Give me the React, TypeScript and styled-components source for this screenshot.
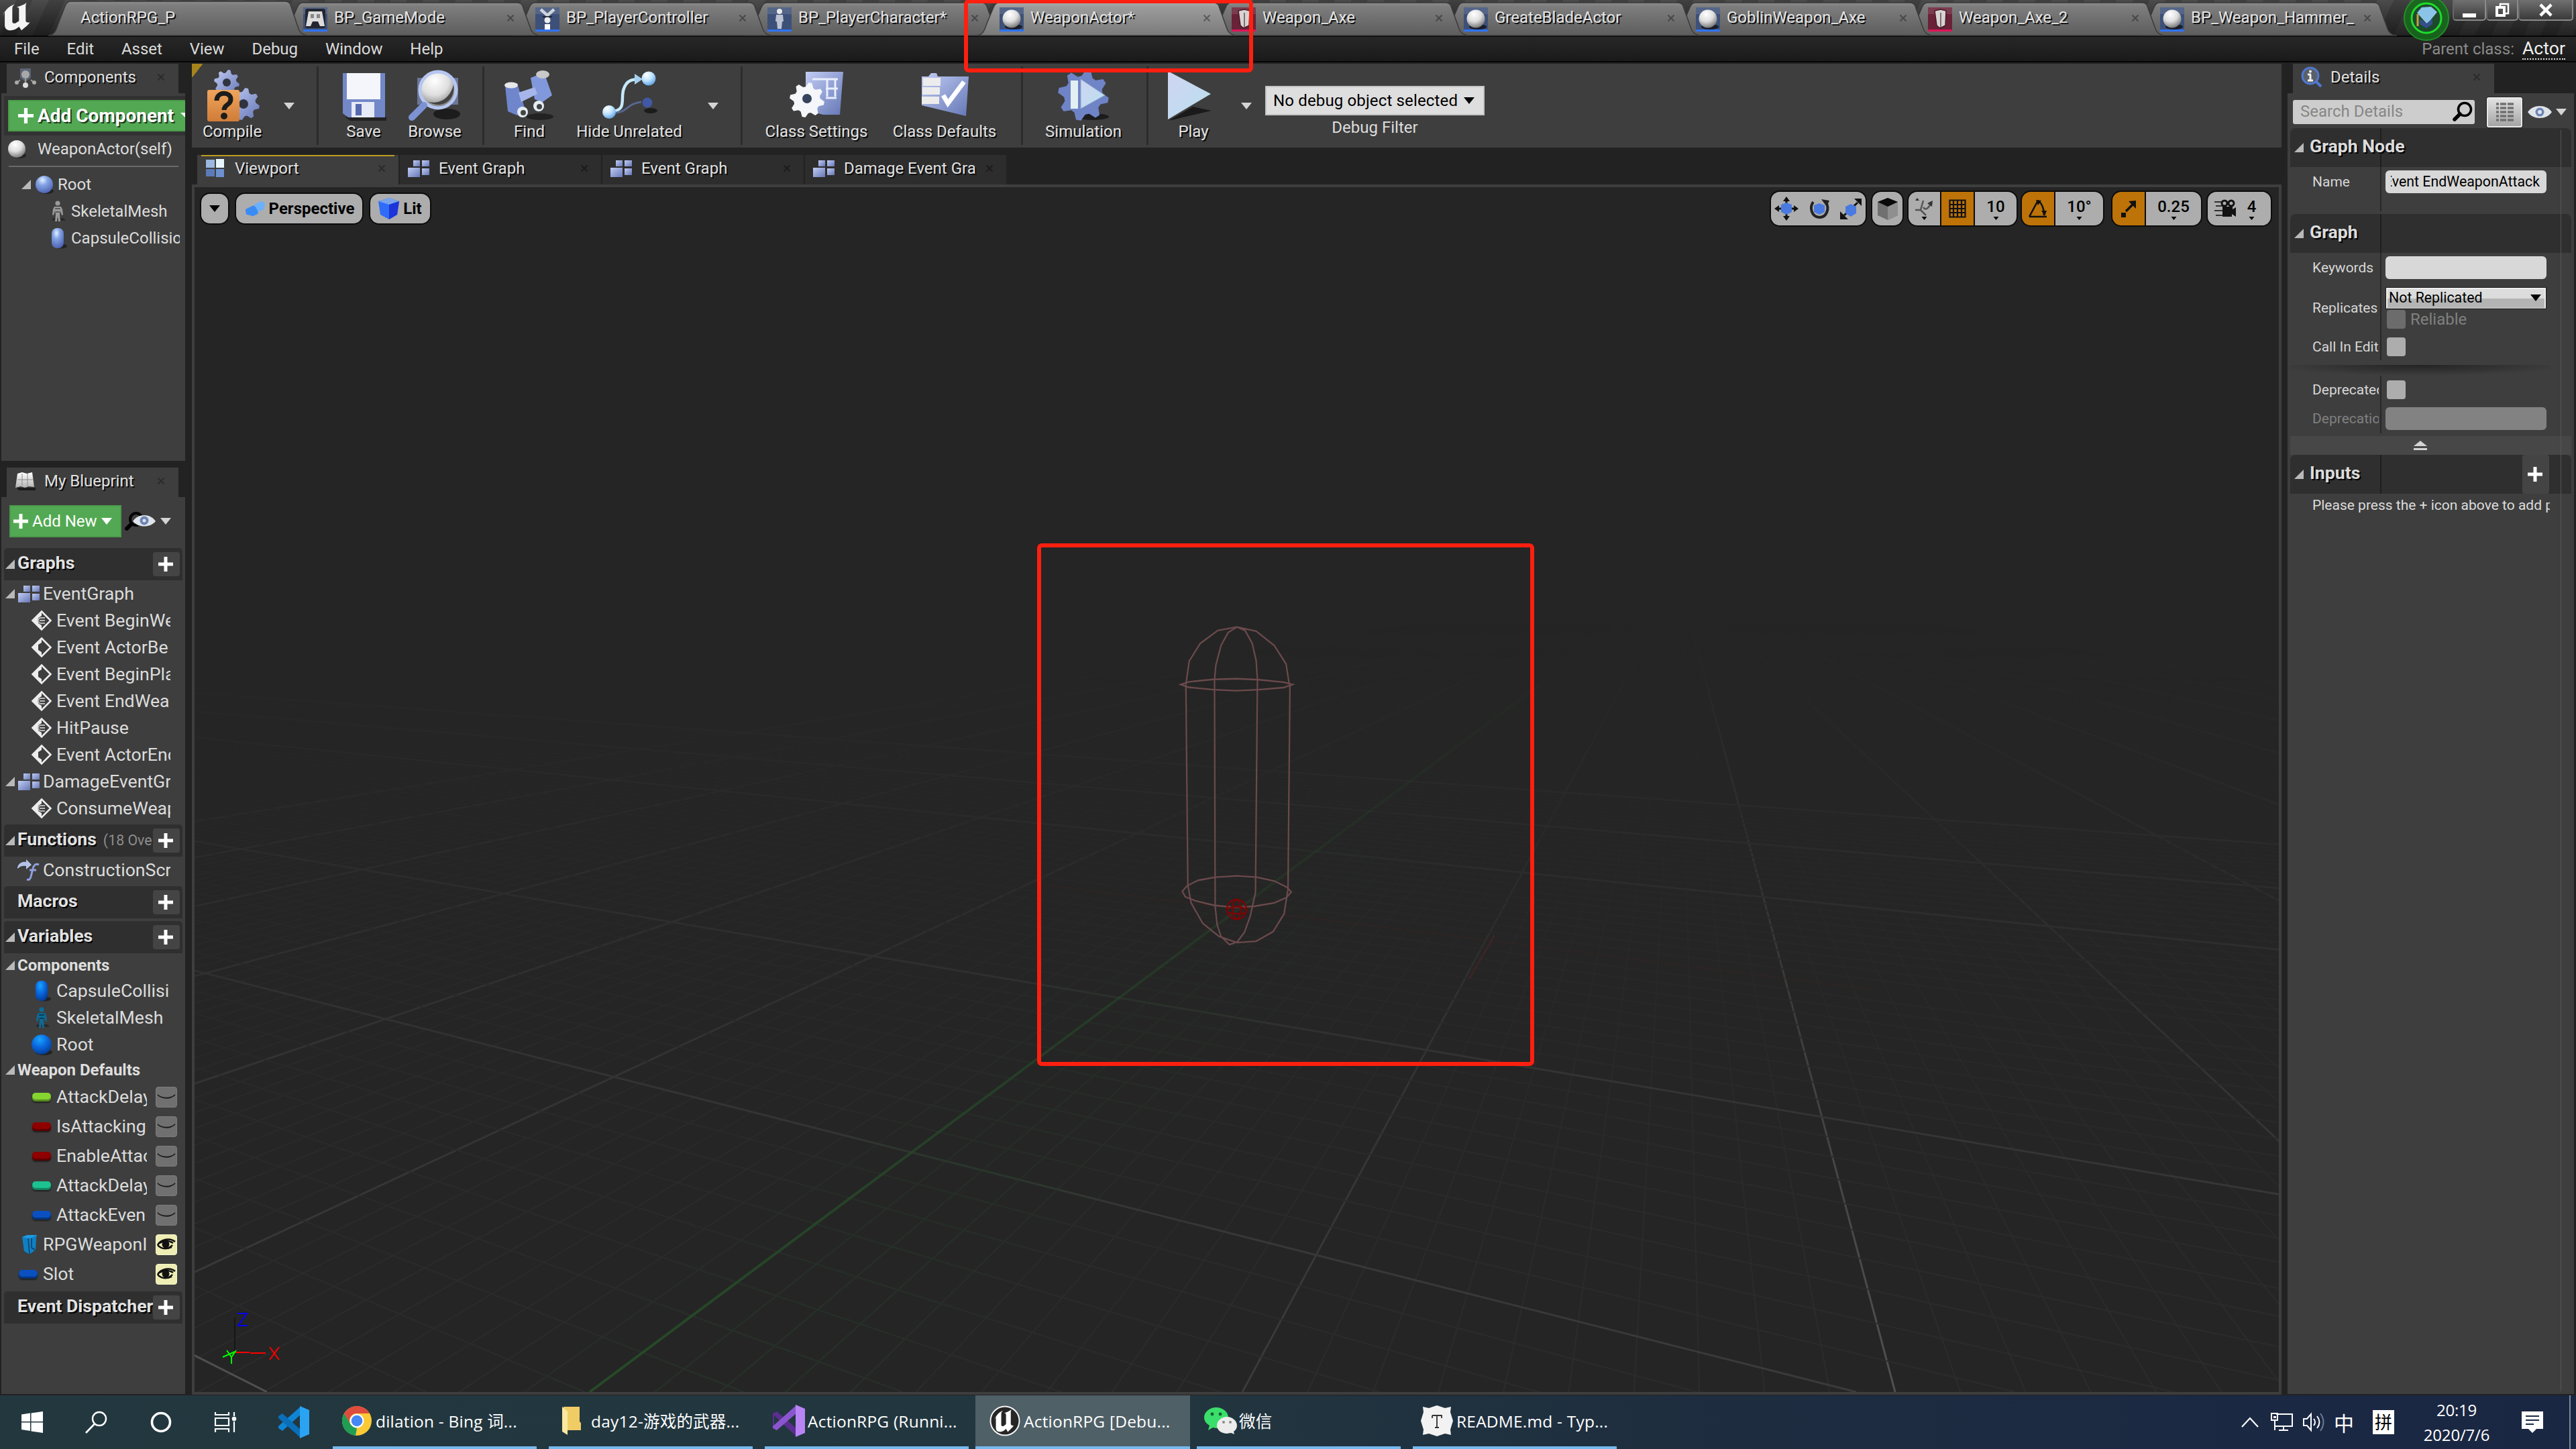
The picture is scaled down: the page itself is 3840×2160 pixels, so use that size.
import React from "react";
import styled, { createGlobalStyle, css } from "styled-components";

const ui = `Roboto, "Noto Sans CJK SC", sans-serif`;
const sys = `"Open Sans", "Noto Sans CJK SC", sans-serif`;

const Global = createGlobalStyle`
  * { box-sizing: border-box; }
  html, body { margin: 0; padding: 0; background: #222; }
  body { width: 3840px; height: 2160px; overflow: hidden; }
  svg { display: block; flex: none; overflow: visible; }
`;

const Screen = styled.div`
  position: relative;
  display: flex;
  flex-direction: column;
  width: 3840px;
  height: 2160px;
  overflow: hidden;
  background: #222222;
  color: #dcdcdc;
  font: 400 24px/28px ${ui};
  white-space: nowrap;
`;

/* ---------- title bar ---------- */

const TitleBar = styled.header`
  position: relative;
  display: flex;
  height: 53px;
  flex: none;
  background:
    linear-gradient(rgba(0, 0, 0, 0), rgba(0, 0, 0, 0.55)),
    repeating-linear-gradient(115deg, #4b4b4b 0 22px, #404040 22px 44px);
`;
const LogoBox = styled.div`
  width: 72px;
  flex: none;
  padding: 4px 0 0 2px;
`;
const TabStrip = styled.div`
  display: flex;
  flex: none;
  width: 3512px;
`;
const AppTab = styled.div<{ $z: number }>`
  position: relative;
  z-index: ${(p) => p.$z};
  width: 387px;
  height: 53px;
  margin-right: -41px;
  flex: none;
  display: flex;
  align-items: center;
  padding: 0 39px 0 34px;
`;
const TabShape = styled.svg`
  position: absolute;
  left: 0;
  top: 0;
  z-index: -1;
`;
const TabLabel = styled.span<{ $ml: number }>`
  margin-left: ${(p) => p.$ml}px;
  flex: 1;
  color: #e4e4e4;
  text-shadow: 2px 2px 0 #111;
  overflow: hidden;
  padding-bottom: 2px;
`;
const WindowButtons = styled.div`
  position: absolute;
  right: 4px;
  top: 0;
  display: flex;
  height: 31px;
`;
const WinButton = styled.div<{ $w: number }>`
  width: ${(p) => p.$w}px;
  height: 31px;
  display: flex;
  align-items: center;
  justify-content: center;
  border: 2px solid #8a8a8a;
  border-top: 0;
  border-left-color: #666;
  border-radius: 0 0 5px 5px;
  background: linear-gradient(#707070, #3a3a3a);
`;
const TutorialBadge = styled.div`
  position: absolute;
  left: 3582px;
  top: -8px;
  z-index: 30;
`;

/* ---------- menu ---------- */

const MenuBar = styled.nav`
  display: flex;
  align-items: center;
  height: 40px;
  flex: none;
  padding: 2px 16px 2px 21px;
  border-top: 2px solid #050505;
  border-bottom: 2px solid #050505;
  background: linear-gradient(#272727, #1a1a1a);
`;
const MenuItem = styled.span`
  color: #dadada;
  margin-right: 40.8px;
`;
const ParentClass = styled.div`
  margin-left: auto;
  display: flex;
  align-items: center;
  gap: 12px;
  color: #8a8a8a;
`;
const ParentLink = styled.span`
  color: #f0f0f0;
  font-size: 26.67px;
  line-height: 30px;
  border-bottom: 2px dotted #ddd;
`;

/* ---------- panels ---------- */

const Main = styled.main`
  display: flex;
  height: 1987px;
  flex: none;
  padding-top: 2px;
`;
const LeftColumn = styled.aside`
  width: 276px;
  margin-right: 10px;
  padding-left: 2px;
  flex: none;
  display: flex;
  flex-direction: column;
`;
const PanelTab = styled.div<{ $w: number }>`
  height: 44px;
  width: ${(p) => p.$w}px;
  margin-left: 8px;
  flex: none;
  display: flex;
  align-items: center;
  padding: 0 21px 4px 12px;
  gap: 12px;
  background: #3e3e3e;
`;
const PanelTitle = styled.span`
  flex: 1;
  color: #e0e0e0;
  text-shadow: 2px 2px 0 #0c0c0c;
  overflow: hidden;
  height: 32px;
  line-height: 32px;
`;
const PanelBody = styled.section<{ $h: number; $gap: number }>`
  height: ${(p) => p.$h}px;
  margin-bottom: ${(p) => p.$gap}px;
  flex: none;
  background: #3e3e3e;
  padding: 4px 4px 0 4px;
`;
const AddComponentFrame = styled.div`
  height: 59px;
  margin-right: -4px;
  padding: 6px 0 6px 6px;
  background: #323232;
`;
const GreenButton = styled.button<{ $w: number; $h: number; $size: number; $bold?: boolean }>`
  width: ${(p) => p.$w}px;
  height: ${(p) => p.$h}px;
  flex: none;
  display: flex;
  align-items: center;
  border: 2px solid #4a9a4a;
  border-right-width: ${(p) => (p.$bold ? 0 : 2)}px;
  background: #53a953;
  color: #fff;
  font: ${(p) => (p.$bold ? 700 : 400)} ${(p) => p.$size}px ${ui};
  text-shadow: ${(p) => (p.$bold ? "2px 2px 0 #1c3a1c" : "none")};
  padding: 0 0 0 ${(p) => (p.$bold ? 13 : 4)}px;
  gap: 6px;
  overflow: hidden;
  white-space: nowrap;
`;
const SelfRow = styled.div`
  height: 45px;
  display: flex;
  align-items: center;
  padding: 0 0 5px 5px;
  gap: 17px;
`;
const Rule = styled.div`
  height: 2px;
  margin: 0 6px 6px 7px;
  background: #6a6a6a;
`;
const TreeRow = styled.div<{ $pad: number; $h?: number; $size?: number; $clip?: number; $gap?: number }>`
  height: ${(p) => p.$h ?? 40}px;
  display: flex;
  align-items: center;
  padding-left: ${(p) => p.$pad}px;
  padding-right: ${(p) => p.$clip ?? 18}px;
  gap: ${(p) => p.$gap ?? 6}px;
  font-size: ${(p) => p.$size ?? 26.67}px;
  line-height: 36px;
`;
const TreeText = styled.span`
  flex: 1;
  min-width: 0;
  overflow: hidden;
`;
const AddNewRow = styled.div`
  display: flex;
  align-items: center;
  height: 72px;
  padding: 0 0 8px 8px;
  gap: 5px;
`;
const SectionHeader = styled.div<{ $gap?: boolean }>`
  height: 48px;
  margin-top: ${(p) => (p.$gap ? 4 : 0)}px;
  display: flex;
  align-items: center;
  background: #2f2f2f;
  border-radius: 5px 5px 0 0;
  padding: 0 4px 0 2px;
`;
const SectionTitle = styled.span`
  font: 700 26.67px/36px ${ui};
  color: #e2e2e2;
  text-shadow: 2px 2px 0 #000;
  margin: 0 0 4px 4px;
  overflow: hidden;
`;
const Muted = styled.span`
  font-size: 21.33px;
  color: #8c8c8c;
  margin-left: 10px;
  overflow: hidden;
`;
const PlusButton = styled.div<{ $h?: number }>`
  margin-left: auto;
  width: 40px;
  height: ${(p) => p.$h ?? 36}px;
  flex: none;
  display: flex;
  align-items: center;
  justify-content: center;
  border-radius: 4px;
  background: #444;
  padding: 0 2px 1px 0;
`;
const Category = styled.div`
  height: 36px;
  display: flex;
  align-items: center;
  gap: 4px;
  padding-left: 2px;
  font-weight: 700;
  color: #dedede;
`;
const EyeBox = styled.div<{ $on?: boolean }>`
  width: 32px;
  height: 31px;
  flex: none;
  border-radius: 4px;
  background: ${(p) => (p.$on ? "#eeeeb4" : "#707070")};
  border: 1px solid ${(p) => (p.$on ? "#f6f6c8" : "#7c7c7c")};
  display: flex;
  align-items: center;
  justify-content: center;
`;
const Pill = styled.span<{ $c: string }>`
  width: 28px;
  height: 13px;
  flex: none;
  border-radius: 5px;
  background: ${(p) => p.$c};
  box-shadow: inset 0 -3px 1px rgba(0, 0, 0, 0.35), 0 2px 2px rgba(0, 0, 0, 0.5);
`;
const VarText = styled(TreeText)`
  margin-right: 5px;
`;

/* ---------- toolbar ---------- */

const Center = styled.div`
  width: 3115px;
  flex: none;
  display: flex;
  flex-direction: column;
`;
const Toolbar = styled.div`
  height: 125px;
  flex: none;
  display: flex;
  background: linear-gradient(128deg, #a8841c 0 13px, transparent 13px), #3e3e3e;
`;
const Tool = styled.div<{ $w: number; $ml?: number }>`
  width: ${(p) => p.$w}px;
  margin-left: ${(p) => p.$ml ?? 0}px;
  flex: none;
  display: flex;
  flex-direction: column;
  align-items: center;
  padding-top: 9px;
`;
const ToolLabel = styled.span`
  margin-top: 2px;
  color: #e2e2e2;
  text-shadow: 2px 2px 0 #0a0a0a;
`;
const ToolArrow = styled.div<{ $w: number }>`
  width: ${(p) => p.$w}px;
  flex: none;
  display: flex;
  justify-content: center;
  padding-top: 58px;
`;
const ToolRule = styled.div<{ $ml: number }>`
  width: 3px;
  height: 117px;
  margin: 4px 0 0 ${(p) => p.$ml}px;
  flex: none;
  background: #2c2c2c;
`;
const DebugBox = styled.div`
  width: 327px;
  margin-left: 2px;
  padding-top: 33px;
  display: flex;
  flex-direction: column;
  align-items: center;
  gap: 4px;
`;
const DebugCombo = styled.div`
  width: 327px;
  height: 44px;
  display: flex;
  align-items: center;
  justify-content: space-between;
  padding: 0 13px 0 10px;
  background: #dedede;
  border: 2px solid #c4c4c4;
  color: #000;
  letter-spacing: 0.15px;
`;
const DocTabs = styled.div`
  display: flex;
  height: 55px;
  flex: none;
  padding: 11px 0 0 8px;
  gap: 2px;
`;
const DocTab = styled.div<{ $active?: boolean }>`
  width: 300px;
  height: 44px;
  display: flex;
  align-items: center;
  gap: 14px;
  padding: 0 20px 4px 12px;
  background: ${(p) => (p.$active ? "#3e3e3e" : "#2d2d2d")};
  ${(p) => p.$active && css`
    background: linear-gradient(#bb9d1e, #bb9d1e) 6px 0 / 288px 2px no-repeat, #3e3e3e;
  `}
`;

/* ---------- viewport ---------- */

const Viewport = styled.div`
  position: relative;
  height: 1804px;
  flex: none;
  border: 4px solid #3e3e3e;
  background: #252525;
  overflow: hidden;
`;
const Scene = styled.svg`
  position: absolute;
  left: 0;
  top: 0;
`;
const ViewBar = styled.div`
  position: relative;
  display: flex;
  align-items: center;
  height: 64px;
  padding: 0 12px 0 10px;
`;
const ViewGroup = styled.div<{ $w: number; $mr: number; $h?: number }>`
  width: ${(p) => p.$w}px;
  height: ${(p) => p.$h ?? 50}px;
  margin-right: ${(p) => p.$mr}px;
  flex: none;
  display: flex;
  align-items: center;
  justify-content: center;
  gap: 5px;
  border-radius: 13px;
  background: #adadad;
  box-shadow: 0 0 0 2px #0c0c0c;
  color: #000;
  font-weight: 700;
  overflow: hidden;
`;
const Cell = styled.div<{ $w: number; $on?: boolean }>`
  width: ${(p) => p.$w}px;
  height: 50px;
  flex: none;
  display: flex;
  flex-direction: column;
  align-items: center;
  justify-content: center;
  background: ${(p) => (p.$on ? "#bd7307" : "#adadad")};
  font-weight: 500;
`;
const Segments = styled(ViewGroup)`
  gap: 2px;
  background: #0c0c0c;
`;
const SnapText = styled.span`
  height: 29px;
`;
const Spacer = styled.div`
  flex: 1;
`;

/* ---------- details ---------- */

const Right = styled.aside`
  position: relative;
  width: 427px;
  margin-left: 9px;
  flex: none;
`;
const DetailsBody = styled.section`
  height: 1939px;
  background: #3e3e3e;
  padding: 0 4px;
`;
const SearchRow = styled.div`
  height: 52px;
  display: flex;
  align-items: center;
  padding: 4px 0 0 4px;
`;
const SearchBox = styled.div`
  width: 271px;
  height: 36px;
  display: flex;
  align-items: center;
  justify-content: space-between;
  padding: 0 3px 2px 11px;
  border-radius: 3px;
  background: #cdcdcd;
  color: #868686;
  margin-right: 18px;
`;
const MatrixButton = styled.div`
  width: 53px;
  height: 45px;
  display: flex;
  align-items: center;
  justify-content: center;
  border: 2px solid #e8e8e8;
  border-radius: 3px;
  background: linear-gradient(#e2e2e2, #a4a4a4);
  box-shadow: 0 0 0 1px #222;
  margin-right: 8px;
`;
const DetailHeader = styled.div`
  height: 58px;
  display: flex;
  align-items: center;
  padding: 0 33px 0 6px;
  border-radius: 8px 8px 0 0;
  background: linear-gradient(#1f1f1f, #1f1f1f) 134px 0 / 2px 58px no-repeat, #2f2f2f;
`;
const DetailTitle = styled.span`
  font: 700 26.67px/36px ${ui};
  text-shadow: 2px 2px 0 #000;
  margin: 0 0 5px 9px;
`;
const DetailRow = styled.div<{ $h: number; $off?: boolean }>`
  height: ${(p) => p.$h}px;
  display: flex;
  align-items: center;
  font-size: 21.33px;
  color: ${(p) => (p.$off ? "#808080" : "#d6d6d6")};
`;
const DetailLabel = styled.div`
  width: 134px;
  padding: 0 2px 0 33px;
  height: 100%;
  display: flex;
  align-items: center;
  flex: none;
  font-size: 21px;
`;
const Clip = styled.span`
  overflow: hidden;
`;
const DetailValue = styled.div`
  height: 100%;
  flex: 1;
  padding-left: 6px;
  border-left: 2px solid #272727;
  display: flex;
  flex-direction: column;
  justify-content: center;
`;
const Field = styled.div<{ $off?: boolean }>`
  width: 240px;
  height: 34px;
  border-radius: 6px;
  background: ${(p) => (p.$off ? "#828282" : "#d8d8d8")};
  color: #000;
  padding: 0 10px 0 8px;
  display: flex;
  align-items: center;
`;
const FieldClip = styled.div`
  display: flex;
  justify-content: flex-end;
  width: 222px;
  overflow: hidden;
`;
const Combo = styled.div`
  width: 238px;
  height: 31px;
  margin-left: 1px;
  border: 2px solid #eee;
  border-bottom-color: #bbb;
  background: linear-gradient(#dcdcdc 50%, #b4b4b4 52%);
  box-shadow: 0 0 0 1px #1c1c1c;
  color: #000;
  display: flex;
  align-items: center;
  justify-content: space-between;
  padding: 0 5px 0 2px;
`;
const CheckLine = styled.div<{ $mt?: number }>`
  display: flex;
  align-items: center;
  gap: 7px;
  margin: ${(p) => p.$mt ?? 0}px 0 0 2px;
  font-size: 24px;
  color: #808080;
`;
const Check = styled.span<{ $off?: boolean }>`
  width: 28px;
  height: 28px;
  border-radius: 4px;
  background: ${(p) => (p.$off ? "#6c6c6c" : "#adadad")};
`;
const Shade = styled.div`
  height: 16px;
  margin-top: 7px;
  margin-right: 32px;
  background: radial-gradient(ellipse 56% 100% at 50% 0, #232323, #3e3e3e);
`;
const ExpandBar = styled.div`
  height: 28px;
  margin-top: 4px;
  display: flex;
  align-items: center;
  padding-left: 184px;
  background: #474747;
`;
const Note = styled.div`
  height: 36px;
  width: 387px;
  padding-left: 33px;
  overflow: hidden;
  font-size: 21px;
  line-height: 35px;
`;
const ScrollTrack = styled.div`
  position: absolute;
  left: 407px;
  top: 99px;
  width: 1px;
  height: 1880px;
  background: #555;
`;

/* ---------- taskbar ---------- */

const Taskbar = styled.footer`
  height: 80px;
  flex: none;
  display: flex;
  align-items: stretch;
  background: linear-gradient(90deg, #23373f 0%, #22363f 45%, #1e2e3f 64%, #1a2843 90%, #1a2742 100%);
  font-family: ${sys};
  color: #fff;
`;
const SysIcons = styled.div`
  width: 496px;
  display: flex;
  align-items: center;
  padding-left: 32px;
  flex: none;
`;
const Slot = styled.div<{ $w: number }>`
  width: ${(p) => p.$w}px;
  flex: none;
`;
const Task = styled.div<{ $w: number; $mr: number; $pl: number; $active?: boolean }>`
  width: ${(p) => p.$w}px;
  margin-right: ${(p) => p.$mr}px;
  padding-left: ${(p) => p.$pl}px;
  flex: none;
  display: flex;
  align-items: center;
  border-bottom: 4px solid #76b9ed;
  background: ${(p) => (p.$active ? "#4f6067" : "transparent")};
`;
const TaskText = styled.span<{ $ml: number; $w: number }>`
  margin-left: ${(p) => p.$ml}px;
  width: ${(p) => p.$w}px;
  font-size: 24.5px;
  letter-spacing: 0.2px;
  padding-top: 2px;
`;
const Tray = styled.div`
  margin-left: auto;
  display: flex;
  align-items: center;
  padding-right: 8px;
`;
const Ime = styled.span`
  width: 30px;
  font: 400 30px/34px "Noto Sans CJK SC", sans-serif;
  margin-right: 28px;
  margin-left: -1px;
`;
const ImeBox = styled.span`
  width: 32px;
  height: 36px;
  background: #fff;
  color: #000;
  font: 400 26px/34px "Noto Sans CJK SC", sans-serif;
  text-align: center;
  margin-right: 37px;
`;
const Clock = styled.div`
  width: 112px;
  display: flex;
  flex-direction: column;
  align-items: center;
  font-size: 24px;
  line-height: 37px;
  letter-spacing: -0.2px;
  margin-right: 41px;
`;
const ShowDesktop = styled.div`
  width: 2px;
  height: 80px;
  margin-left: 39px;
  background: #7e8795;
`;

/* ---------- annotation frames ---------- */

const Highlight = styled.div<{ $x: number; $y: number; $w: number; $h: number }>`
  position: absolute;
  z-index: 40;
  left: ${(p) => p.$x}px;
  top: ${(p) => p.$y}px;
  width: ${(p) => p.$w}px;
  height: ${(p) => p.$h}px;
  border: 6px solid #ff1f10;
  border-radius: 7px;
`;

/* ---------- drawings ---------- */

const SharedDefs = () => (
  <svg width="0" height="0" style={{ position: "absolute" }}>
    <defs>
      <radialGradient id="white" cx=".4" cy=".25" r=".8"><stop offset="0" stopColor="#fff" /><stop offset=".5" stopColor="#dedede" /><stop offset="1" stopColor="#6c6c6c" /></radialGradient>
      <radialGradient id="blue" cx=".4" cy=".25" r=".8"><stop offset="0" stopColor="#e4f2ff" /><stop offset=".35" stopColor="#86a6e6" /><stop offset="1" stopColor="#4a5fae" /></radialGradient>
      <radialGradient id="deep" cx=".4" cy=".25" r=".8"><stop offset="0" stopColor="#18a4ff" /><stop offset=".5" stopColor="#0a66dc" /><stop offset="1" stopColor="#033a90" /></radialGradient>
      <radialGradient id="cyan" cx=".35" cy=".25" r=".8"><stop offset="0" stopColor="#fff" /><stop offset=".5" stopColor="#bfe4ff" /><stop offset="1" stopColor="#5b9fe0" /></radialGradient>
      <linearGradient id="peri" x1="0" y1="0" x2="1" y2="1"><stop offset="0" stopColor="#c2cdf4" /><stop offset="1" stopColor="#6577b6" /></linearGradient>
      <linearGradient id="ice" x1="0" y1="0" x2="1" y2="1"><stop offset="0" stopColor="#d0d4f2" /><stop offset="1" stopColor="#b8e0ee" /></linearGradient>
      <linearGradient id="silver" x1="0" y1="0" x2="0" y2="1"><stop offset="0" stopColor="#fff" /><stop offset="1" stopColor="#b4b4b4" /></linearGradient>
      <linearGradient id="orange" x1="0" y1="0" x2="0" y2="1"><stop offset="0" stopColor="#f0a55c" /><stop offset="1" stopColor="#cf7c38" /></linearGradient>
      <linearGradient id="tab" x1="0" y1="0" x2="0" y2="1"><stop offset="0" stopColor="#8c8c8c" /><stop offset=".12" stopColor="#7d7d7d" /><stop offset="1" stopColor="#5d5d5d" /></linearGradient>
      <linearGradient id="tabOn" x1="0" y1="0" x2="0" y2="1"><stop offset="0" stopColor="#aaa" /><stop offset=".12" stopColor="#9c9c9c" /><stop offset="1" stopColor="#7a7a7a" /></linearGradient>
    </defs>
  </svg>
);

const Close = ({ c = "#2b2b2b" }: { c?: string }) => (
  <svg width="10" height="10" viewBox="0 0 10 10"><path d="M.5 .5l9 9M9.500 .5l-9 9" stroke={c} strokeWidth="2" /></svg>
);
const Down = ({ c = "#d4d4d4", w = 16, h = 10 }: { c?: string; w?: number; h?: number }) => (
  <svg width={w} height={h} viewBox="0 0 16 10"><path d="M0 0h16l-8 10z" fill={c} /></svg>
);
const Twist = () => (
  <svg width="14" height="14" viewBox="0 0 14 14"><path d="M14 0v14H0z" fill="#b9b9b9" /></svg>
);
const NoTwist = styled.span`
  width: 14px;
  flex: none;
`;
const Plus = ({ s = 22 }: { s?: number }) => (
  <svg width={s} height={s} viewBox="0 0 22 22"><path d="M8.5 0h5v8.500H22v5h-8.500V22h-5v-8.500H0v-5h8.500z" fill="#fff" /></svg>
);
const UnrealMark = ({ s }: { s: number }) => (
  <svg width={s} height={s * 0.86} viewBox="0 0 44 38">
    <path d="M1 20C3 12 8 5 16 2c-2 2-3 3-3 6v18c0 2 2 3 4 2l4-3V9c0-2-1-3-3-3 4-1 9-3 12-6-1 2-1 4-1 6v18c0 2 1 4 5 3-2 4-6 7-10 11l-3-5c-3 3-6 5-10 5-5 0-7-3-7-7V14c0-2-1-2-3 6z" fill="#f4f4f4" transform="scale(1.15 1)" />
  </svg>
);
const Ball = ({ fill = "url(#blue)", s = 28 }: { fill?: string; s?: number }) => (
  <svg width={s} height={s} viewBox="0 0 28 28"><ellipse cx="17" cy="24" rx="11" ry="4" fill="#1c1c1c" opacity=".8" /><circle cx="14" cy="14" r="13" fill={fill} /></svg>
);
const CapsuleIcon = ({ fill = "url(#blue)" }: { fill?: string }) => (
  <svg width="32" height="32" viewBox="0 0 32 32"><ellipse cx="20" cy="28" rx="10" ry="3.500" fill="#1c1c1c" opacity=".8" /><rect x="7" y="1" width="18" height="30" rx="8" fill={fill} /></svg>
);
const Body = ({ c = "#9a9a9a", d = "#5c5c5c" }: { c?: string; d?: string }) => (
  <svg width="32" height="32" viewBox="0 0 32 32">
    <path d="M9 26h16l3 4H8z" fill="#222" opacity=".7" />
    <circle cx="16" cy="4" r="3.600" fill={c} />
    <path d="M11 9h10l2 4 1 8-2 1-2-7-1 6 1 10h-3l-1-8-1 8h-3l1-10-1-6-2 7-2-1 1-8z" fill={c} />
    <path d="M12 12h8M13 17h6" stroke={d} strokeWidth="2" />
  </svg>
);
const GraphIcon = ({ s = 32 }: { s?: number }) => (
  <svg width={s} height={(s * 26) / 32} viewBox="0 0 32 26"><g fill="url(#peri)"><path d="M8 1h10v9H8z" /><path d="M21 1h11v9H21z" /><path d="M0 12h18v14H0z" /><path d="M21 13h11v10H21z" /></g></svg>
);
const EventIcon = ({ custom }: { custom?: boolean }) => (
  <svg width="32" height="32" viewBox="0 0 32 32">
    <path d="M16 2.500L29.500 16 16 29.500 2.500 16z" fill="none" stroke="#ececec" strokeWidth="2.600" />
    <path d="M16 2.500V9l-5 3v8l5 3v6.500L2.500 16z" fill="#ececec" />
    {custom && <path d="M21 12h-6a4 4 0 000 8h6M13 16h8" fill="none" stroke="#b8b8b8" strokeWidth="2" />}
  </svg>
);
const FunctionIcon = () => (
  <svg width="32" height="32" viewBox="0 0 32 32">
    <path d="M0 12C2 5 8 3 13 4V0l8 8-8 7v-5C8 9 4 10 0 14z" fill="#b4c4e8" />
    <path d="M32 8c-5-2-8 1-9 6l-3 12c-1 4-3 5-6 4M18 16h10" fill="none" stroke="#8ea0dc" strokeWidth="3" />
  </svg>
);
const Cube = () => (
  <svg width="28" height="32" viewBox="0 0 28 32"><path d="M5 5l8-3h14l-1 5-1 17-9 7-8-5z" fill="#1080c4" /><path d="M5 5l8-3h14l-8 4-5 1z" fill="#1c9ce0" /><path d="M14 7l2 24M19 7v14l5 3" stroke="#0a3e62" strokeWidth="1.500" fill="none" /></svg>
);
const Eye = ({ w = 36 }: { w?: number }) => (
  <svg width={w} height={w * 0.56} viewBox="0 0 36 20"><path d="M0 10C8-2 28-2 36 10 28 22 8 22 0 10z" fill="#dfe3ea" /><circle cx="18" cy="10" r="6.500" fill="#6b85b5" /><circle cx="18" cy="10" r="3" fill="#dfe3ea" /></svg>
);
const ShutEye = () => (
  <svg width="28" height="12" viewBox="0 0 28 12"><path d="M1 3c7 6 19 6 26 0-7 6.500-19 6.500-26 0z" stroke="#1a1a1a" strokeWidth="1.600" fill="#1a1a1a" /></svg>
);
const OpenEye = () => (
  <svg width="28" height="20" viewBox="0 0 28 20"><path d="M1 11C6 2 20 0 27 6M1 11c6 7 16 7 22 0M16 16l6-2M4 8c6-4 14-4 20 0" stroke="#111" strokeWidth="2.600" fill="none" /><circle cx="13" cy="10" r="5.500" fill="#111" /></svg>
);
const Lens = ({ w = 30, c = "#000" }: { w?: number; c?: string }) => (
  <svg width={w} height={w} viewBox="0 0 30 30"><circle cx="18" cy="12" r="9.500" fill="none" stroke={c} strokeWidth="3.600" /><path d="M11 19l-8 8" stroke={c} strokeWidth="5.500" strokeLinecap="round" /></svg>
);

const AssetIcon = ({ kind }: { kind: string }) => {
  const red = kind === "mesh";
  return (
    <svg width="36" height="36" viewBox="0 0 36 36" style={{ marginTop: 4 }}>
      <rect width="36" height="36" fill={red ? "#6a2238" : "#3d5078"} />
      <rect width="36" height="10" fill="#fff" opacity=".12" />
      {kind === "ball" && <><ellipse cx="21" cy="29" rx="13" ry="4" fill="#1a1e2a" /><circle cx="18" cy="17" r="13.500" fill="url(#white)" /></>}
      {kind === "pad" && <><rect x="3" y="2" width="30" height="29" rx="3" fill="#23262e" /><path d="M8 6h20l4 22h-7l-3-7h-8l-3 7H4z" fill="#dcdcdc" /><path d="M11 10h5v6h-5zM20 10h5v6h-5z" fill="#888" /></>}
      {kind === "ctrl" && <><path d="M8 3l10 9 10-9M18 12v5" stroke="#d0d4dc" strokeWidth="4.500" fill="none" /><path d="M11 14h14" stroke="#1c2538" strokeWidth="2" /><circle cx="18" cy="19" r="4.500" fill="#eee" /><path d="M18 25v8" stroke="#fff" strokeWidth="8" /></>}
      {kind === "man" && <><circle cx="18" cy="6" r="4" fill="#e8e8e8" /><path d="M13 11h10l1 10h-2l-1 11h-6l-1-11h-2z" fill="#bcc4d4" /></>}
      {red && <path d="M10 5l9-2 8 2-1 22-8 4-5-4z" fill="#d8d4d4" stroke="#4a1a28" strokeWidth="1.500" />}
      {red && <path d="M19 8v22" stroke="#6a4a50" strokeWidth="1.500" />}
      <rect y="33" width="36" height="3" fill={red ? "#e0145a" : "#2f74ff"} />
    </svg>
  );
};

const gear = (cx: number, cy: number, r: number, teeth: number) => {
  const pts: string[] = [];
  const n = teeth * 4;
  for (let i = 0; i < n; i++) {
    const a = ((i + 0.5) / n) * Math.PI * 2;
    const rr = i % 4 < 2 ? r : r * 0.76;
    pts.push(`${(cx + Math.cos(a) * rr).toFixed(1)},${(cy + Math.sin(a) * rr).toFixed(1)}`);
  }
  return pts.join(" ");
};

const ToolIcon = ({ kind }: { kind: string }) => (
  <svg width="80" height="76" viewBox="0 0 80 76">
    {kind === "compile" && <>
      <polygon points={gear(32, 19, 19, 8)} fill="url(#peri)" /><circle cx="32" cy="19" r="6" fill="#30343f" />
      <polygon points={gear(57, 51, 24, 8)} fill="url(#peri)" /><circle cx="57" cy="51" r="7" fill="#30343f" />
      <rect x="3" y="30" width="48" height="47" rx="3" fill="url(#orange)" />
      <path d="M17 46c0-14 21-14 21-2 0 9-10 7-10 16" fill="none" stroke="#1c1c1c" strokeWidth="7" /><circle cx="28" cy="69" r="5" fill="#1c1c1c" />
    </>}
    {kind === "save" && <>
      <path d="M12 70h62v6H20z" fill="#222" />
      <path d="M9 5h63v66H17l-8-6z" fill="#7388c8" /><path d="M15 5h50v39H15z" fill="#f4f6fb" /><path d="M22 48h34v23H22z" fill="#e6eaf6" /><path d="M28 51h9v17h-9z" fill="#5569ad" />
    </>}
    {kind === "browse" && <>
      <ellipse cx="58" cy="66" rx="20" ry="8" fill="#1c1c1c" />
      <path d="M14 12h61v40H14z" fill="#8c9fd4" opacity=".6" />
      <circle cx="45" cy="30" r="27" fill="url(#white)" stroke="#b6c6f0" strokeWidth="5" /><path d="M30 48c20 4 34-8 38-26 4 22-16 38-38 26z" fill="#444" />
      <path d="M24 53L6 71" stroke="#7c92d4" strokeWidth="10" strokeLinecap="round" />
    </>}
    {kind === "find" && <>
      <ellipse cx="56" cy="70" rx="20" ry="5" fill="#222" />
      <path d="M4 24l18-4 12 40-12 8-14-6z" fill="#6f86cc" /><path d="M42 12l20-8 12 34-14 10-12-4z" fill="#8298dc" /><path d="M24 34l24-8 4 10-24 12z" fill="#a6b6ea" />
      <ellipse cx="13" cy="23" rx="10" ry="4.500" fill="#e8e8e8" /><ellipse cx="60" cy="7" rx="10" ry="6" fill="#c8c8c8" /><circle cx="30" cy="63" r="8" fill="#e4ecf4" /><circle cx="54" cy="54" r="8" fill="#e4ecf4" /><circle cx="31" cy="64" r="4" fill="#444" /><circle cx="55" cy="55" r="4" fill="#444" />
    </>}
    {kind === "hide" && <>
      <path d="M12 62c26 0 14-20 20-34 4-12 12-14 24-14" fill="none" stroke="#c6e8fa" strokeWidth="4.500" /><path d="M48 6l12 8-12 8z" fill="#a6d0f0" />
      <path d="M16 64c20 2 20-14 42-16" fill="none" stroke="#56668c" strokeWidth="3" />
      <circle cx="10" cy="63" r="10" fill="url(#cyan)" /><circle cx="69" cy="13" r="10.500" fill="url(#cyan)" /><circle cx="67" cy="49" r="7.500" fill="#4258a4" /><ellipse cx="72" cy="61" rx="10" ry="4" fill="#1c1c1c" />
    </>}
    {kind === "settings" && <>
      <path d="M24 3h56l-5 64H50L24 60z" fill="url(#peri)" /><path d="M34 14h38M54 28h18M54 42h16M56 14v26M68 14v26" stroke="#e8eefc" strokeWidth="3" />
      <polygon points={gear(26, 45, 26, 8)} fill="#f4f6fa" /><circle cx="26" cy="43" r="7" fill="#35435c" />
    </>}
    {kind === "defaults" && <>
      <path d="M6 10h10l4-5h8l2 5h46l-4 59-66-16z" fill="url(#peri)" />
      <path d="M8 12h26v12H8zM7 26h26v11H7zM6 40h26v11H6z" fill="#ececec" /><path d="M38 38l7 12 24-32" fill="none" stroke="#fff" strokeWidth="7" />
    </>}
    {kind === "sim" && <>
      <ellipse cx="54" cy="70" rx="24" ry="5" fill="#1c1c1c" />
      <polygon points={gear(40, 38, 38, 8)} fill="#6f84c6" />
      <path d="M21 16h11v42H21z" fill="#e2f0f4" /><path d="M36 14l36 24-36 20z" fill="url(#ice)" stroke="#8ca6c8" />
    </>}
    {kind === "play" && <><path d="M3 76l64-15-28-6z" fill="#1a1a1a" /><path d="M2 2l64 34L2 74z" fill="url(#ice)" /></>}
  </svg>
);

/* perspective ground grid: both line families converge on one horizon */
const HORIZON = 587;
const BOTTOM = 1796;
const familyA = { vp: 2213, base: 589, step: 97.3 };
const familyB = { vp: -2290, base: 7215, step: 236.9 };
type Line = { x1: number; x2: number; major: boolean; bright: boolean };
const lines = (f: { vp: number; base: number; step: number }, from: number, to: number, bright: number): Line[] => {
  const out: Line[] = [];
  for (let i = from; i <= to; i++) {
    if (i !== 0) out.push({ x1: f.vp, x2: f.base + i * f.step, major: i % 10 === 0, bright: i === bright });
  }
  return out;
};
const gridLines = [...lines(familyA, -60, 90, 20), ...lines(familyB, -40, 30, -30)];

const capsule = [
  "M470 432L480 364 514 312 568 274 627 264 686 276 742 318 778 372 788 432",
  "M558 418L562 376 578 318 600 280 627 264 652 274 674 312 686 362 690 416",
  "M454 432L480 424 554 417 627 415 694 418 770 425 798 432 770 441 692 447 627 450 556 447 478 440Z",
  "M470 432L476 1018 486 1070 522 1130 572 1168 627 1186 686 1182 738 1154 772 1102 784 1030 790 432",
  "M558 418L560 1080 566 1134 578 1168 604 1192 628 1184 650 1156 668 1108 684 1040 690 416",
  "M459 1036L474 1020 508 1004 560 995 627 991 688 995 742 1006 780 1024 794 1038 780 1054 742 1070 680 1080 620 1083 556 1077 500 1064 468 1052Z",
];

const lineColor = (l: Line) => (l.bright ? "#505050" : l.major ? "#3b3b3b" : "#2d2d2d");

const SceneArt = () => (
  <Scene width="3107" height="1796" viewBox="0 0 3107 1796">
    <defs>
      <linearGradient id="fade" gradientUnits="userSpaceOnUse" x1="0" y1="650" x2="0" y2="1796">
        <stop offset="0" stopColor="#000" /><stop offset=".25" stopColor="#3a3a3a" /><stop offset=".6" stopColor="#aaa" /><stop offset="1" stopColor="#fff" />
      </linearGradient>
      <mask id="far" maskUnits="userSpaceOnUse" x="0" y="0" width="3107" height="1796"><rect width="3107" height="1796" fill="url(#fade)" /></mask>
      <filter id="soft" filterUnits="userSpaceOnUse" x="-400" y="0" width="3800" height="2200"><feGaussianBlur stdDeviation="70" /></filter>
      <mask id="near" maskUnits="userSpaceOnUse" x="0" y="0" width="3107" height="1796"><path d={`M${familyA.vp} ${HORIZON}L380 ${BOTTOM + 100}L900 ${BOTTOM + 100}Z`} fill="#fff" filter="url(#soft)" /></mask>
    </defs>
    <g mask="url(#far)">
      {gridLines.map((l, k) => (
        <line key={k} x1={l.x1} y1={HORIZON} x2={l.x2} y2={BOTTOM} stroke={lineColor(l)} strokeWidth={l.major ? 3 : 2.5} opacity={l.major ? 1 : 0.8} />
      ))}
      <g mask="url(#near)">
        {gridLines.map((l, k) => (
          <line key={k} x1={l.x1} y1={HORIZON} x2={l.x2} y2={BOTTOM} stroke={l.major ? "#273d29" : "#263328"} strokeWidth={l.major ? 3 : 2.5} opacity=".8" />
        ))}
      </g>
    </g>
    <line x1={familyA.vp - 200} y1={HORIZON + 149} x2={familyA.base} y2={BOTTOM} stroke="#274a29" strokeWidth="4" mask="url(#far)" />
    <path d="M1250 1038L1930 1123L2500 1196" stroke="#362424" strokeWidth="2" fill="none" opacity=".6" />
    <path d="M1938 1115L1900 1180" stroke="#4a2626" strokeWidth="3" opacity=".6" />
    <g transform="translate(1250 521) scale(.4847 .5102)" fill="none" stroke="#6b4a4c" strokeWidth="4.600">
      {capsule.map((d) => <path key={d} d={d} />)}
      <g stroke="#7c0505" strokeWidth="4.600"><ellipse cx="626" cy="1089" rx="30" ry="29" /><ellipse cx="626" cy="1089" rx="12" ry="29" /><path d="M596 1088q30 -14 60 0M598 1098q28 8 56 0" /></g>
    </g>
    <path d="M60 1740V1685" stroke="#161616" strokeWidth="2" />
    <path d="M60 1737h22M83 1738h23" stroke="#f00" strokeWidth="2" />
    <path d="M112 1729l14 19M126 1729l-14 19" stroke="#f00" strokeWidth="2" />
    <path d="M64 1679h14l-13 18h14" stroke="#00f" strokeWidth="2" fill="none" />
    <path d="M48 1734l7 10 7-10M55 1743v11M42 1744l18-8" stroke="#0f0" strokeWidth="2" fill="none" />
  </Scene>
);

const appTabs = [
  { t: "ActionRPG_P", k: "" },
  { t: "BP_GameMode", k: "pad" },
  { t: "BP_PlayerController", k: "ctrl" },
  { t: "BP_PlayerCharacter*", k: "man" },
  { t: "WeaponActor*", k: "ball" },
  { t: "Weapon_Axe", k: "mesh" },
  { t: "GreateBladeActor", k: "ball" },
  { t: "GoblinWeapon_Axe", k: "ball" },
  { t: "Weapon_Axe_2", k: "mesh" },
  { t: "BP_Weapon_Hammer_", k: "ball" },
];

const Title = () => (
  <TitleBar>
    <LogoBox><UnrealMark s={48} /></LogoBox>
    <TabStrip>
      {appTabs.map((tab, i) => {
        const on = i === 4;
        const top = i === 0 ? 2 : 4;
        return (
          <AppTab key={tab.t} $z={on ? 20 : 12 - i}>
            <TabShape width="387" height="53" viewBox="0 0 387 53">
              <path d={`M0 53C10 52 12 44 15 35L25 ${top + 7}C27 ${top + 2} 29 ${top} 33 ${top}H353C358 ${top} 361 ${top + 3} 362 ${top + 8}L372 40C374 48 378 52 387 53Z`} fill={on ? "url(#tabOn)" : "url(#tab)"} stroke="#3a3a3a" strokeWidth="1.500" />
            </TabShape>
            {tab.k && <AssetIcon kind={tab.k} />}
            <TabLabel $ml={tab.k ? 10 : 14}>{tab.t}</TabLabel>
            {tab.k && <Close c={on ? "#5a5a5a" : "#484848"} />}
          </AppTab>
        );
      })}
    </TabStrip>
    <TutorialBadge>
      <svg width="70" height="70" viewBox="0 0 70 70">
        <circle cx="35" cy="35" r="33" fill="#176a1c" stroke="#1f9a26" strokeWidth="2" opacity=".9" />
        <circle cx="35" cy="35" r="22" fill="#1c4a2a" stroke="#1fdc2a" strokeWidth="3" />
        <path d="M28 19l14-1 9 8-15 18-15-17z" fill="#8cc4e8" /><path d="M25 36v8l10 6 9-6v-8l-9 7z" fill="#34508a" /><path d="M22 29v18" stroke="#c8a040" strokeWidth="3" />
      </svg>
    </TutorialBadge>
    <WindowButtons>
      <WinButton $w={50}><svg width="22" height="24"><path d="M1 17h20v6H1z" fill="#fff" /></svg></WinButton>
      <WinButton $w={48}><svg width="22" height="22" viewBox="0 0 22 22"><path d="M8 6V2h12v14h-4" fill="none" stroke="#fff" strokeWidth="2.500" /><rect x="3" y="7" width="11" height="12" fill="none" stroke="#fff" strokeWidth="4" /></svg></WinButton>
      <WinButton $w={82}><svg width="20" height="18" viewBox="0 0 22 20"><path d="M2 1l18 18M20 1L2 19" stroke="#fff" strokeWidth="5" /></svg></WinButton>
    </WindowButtons>
  </TitleBar>
);

const graphRows: [string, boolean][] = [
  ["Event BeginWe", true], ["Event ActorBe", false], ["Event BeginPla", false],
  ["Event EndWea", true], ["HitPause", true], ["Event ActorEnd", false],
];
const variables: [string, string][] = [
  ["AttackDelay", "#86d430"], ["IsAttacking", "#8f0000"], ["EnableAttac", "#8f0000"],
  ["AttackDelay", "#1cc290"], ["AttackEven", "#0a50c0"],
];

const Header = ({ t, extra, gap, twist = true }: { t: string; extra?: string; gap?: boolean; twist?: boolean }) => (
  <SectionHeader $gap={gap}>
    {twist ? <Twist /> : <NoTwist />}
    <SectionTitle>{t}</SectionTitle>
    {extra && <Muted>{extra}</Muted>}
    <PlusButton><Plus /></PlusButton>
  </SectionHeader>
);

const Left = () => (
  <LeftColumn>
    <PanelTab $w={256}>
      <svg width="32" height="32" viewBox="0 0 32 32"><path d="M8 3h16v14l-8 6-8-6z" fill="#5b6474" /><circle cx="16" cy="12" r="6" fill="#a8a8a8" /><path d="M16 18v8M8 20l-5 5M24 20l5 5" stroke="#999" strokeWidth="2" /><circle cx="3" cy="24" r="3" fill="#aaa" /><circle cx="29" cy="24" r="3" fill="#aaa" /><circle cx="16" cy="28" r="4" fill="#ddd" /></svg>
      <PanelTitle>Components</PanelTitle><Close />
    </PanelTab>
    <PanelBody $h={548} $gap={10}>
      <AddComponentFrame>
        <GreenButton $w={264} $h={47} $size={28} $bold><Plus s={23} />Add Component<svg width="14" height="10"><path d="M4 0h10v10z" fill="#fff" /></svg></GreenButton>
      </AddComponentFrame>
      <SelfRow><Ball fill="url(#white)" />WeaponActor(self)</SelfRow>
      <Rule />
      <TreeRow $pad={26} $size={24} $gap={6} $clip={0}><Twist /><Ball /><TreeText>Root</TreeText></TreeRow>
      <TreeRow $pad={64} $size={24} $gap={4} $clip={4}><Body /><TreeText>SkeletalMesh</TreeText></TreeRow>
      <TreeRow $pad={64} $size={24} $gap={4} $clip={4}><CapsuleIcon /><TreeText>CapsuleCollisio</TreeText></TreeRow>
    </PanelBody>
    <PanelTab $w={256}>
      <svg width="32" height="32" viewBox="0 0 32 32"><path d="M3 26h28v4H6z" fill="#1c1c1c" /><path d="M4 5l7-2 7 2 8-2 3 22-8-1-6 2-6-2-8 2z" fill="url(#silver)" /><path d="M11 5v18M19 5v20M4 14h24" stroke="#8a8a8a" /></svg>
      <PanelTitle>My Blueprint</PanelTitle><Close />
    </PanelTab>
    <PanelBody $h={1337} $gap={0}>
      <AddNewRow>
        <GreenButton $w={167} $h={48} $size={24}><Plus s={22} />Add New<Down c="#fff" /></GreenButton>
        <svg width="48" height="30" viewBox="0 0 48 30"><circle cx="17" cy="12" r="9" fill="none" stroke="#000" strokeWidth="4" /><path d="M10 19l-7 7" stroke="#000" strokeWidth="6" strokeLinecap="round" /><path d="M12 15C20 3 38 3 46 15 38 25 20 25 12 15z" fill="#dfe3ea" /><circle cx="29" cy="14" r="6.500" fill="#6b85b5" /><circle cx="29" cy="14" r="2.500" fill="#dfe3ea" /></svg>
        <Down />
      </AddNewRow>
      <Header t="Graphs" />
      <TreeRow $pad={2} $gap={5}><Twist /><GraphIcon /><TreeText>EventGraph</TreeText></TreeRow>
      {graphRows.map(([t, c]) => <TreeRow key={t} $pad={40} $gap={6}><EventIcon custom={c} /><TreeText>{t}</TreeText></TreeRow>)}
      <TreeRow $pad={2} $gap={5}><Twist /><GraphIcon /><TreeText>DamageEventGr</TreeText></TreeRow>
      <TreeRow $pad={40} $gap={6}><EventIcon custom /><TreeText>ConsumeWeap</TreeText></TreeRow>
      <Header t="Functions" extra="(18 Ove" gap />
      <TreeRow $pad={20} $gap={6}><FunctionIcon /><TreeText>ConstructionScr</TreeText></TreeRow>
      <Header t="Macros" gap twist={false} />
      <Header t="Variables" gap />
      <Category><Twist />Components</Category>
      <TreeRow $pad={40} $gap={6}><CapsuleIcon fill="url(#deep)" /><TreeText>CapsuleCollisi</TreeText></TreeRow>
      <TreeRow $pad={40} $gap={6}><Body c="#0d6a96" d="#083c58" /><TreeText>SkeletalMesh</TreeText></TreeRow>
      <TreeRow $pad={40} $gap={6}><Ball fill="url(#deep)" s={32} /><TreeText>Root</TreeText></TreeRow>
      <Category><Twist />Weapon Defaults</Category>
      {variables.map(([t, c], i) => (
        <TreeRow key={i} $pad={42} $h={44} $gap={8} $clip={8}><Pill $c={c} /><VarText>{t}</VarText><EyeBox><ShutEye /></EyeBox></TreeRow>
      ))}
      <TreeRow $pad={22} $h={44} $gap={8} $clip={8}><Cube /><VarText>RPGWeaponI</VarText><EyeBox $on><OpenEye /></EyeBox></TreeRow>
      <TreeRow $pad={22} $h={44} $gap={8} $clip={8}><Pill $c="#0a50c0" /><VarText>Slot</VarText><EyeBox $on><OpenEye /></EyeBox></TreeRow>
      <Header t="Event Dispatchers" gap twist={false} />
    </PanelBody>
  </LeftColumn>
);

const ToolButton = ({ k, t, w, ml }: { k: string; t: string; w: number; ml?: number }) => (
  <Tool $w={w} $ml={ml}><ToolIcon kind={k} /><ToolLabel>{t}</ToolLabel></Tool>
);

const WindowGlyph = () => (
  <svg width="30" height="30" viewBox="0 0 30 30"><path d="M1 2h13v12H1z" fill="#9ab8e0" /><path d="M16 1h12v13H16z" fill="#e8f6fc" /><path d="M1 16h13v11H1z" fill="#5c7ab8" /><path d="M16 16h12v12H16z" fill="#6c90d0" /></svg>
);

const SmallDown = () => <Down c="#000" w={9} h={5} />;

const CenterPane = () => (
  <Center>
    <Toolbar>
      <ToolButton k="compile" t="Compile" w={120} /><ToolArrow $w={50}><Down /></ToolArrow>
      <ToolRule $ml={16} />
      <ToolButton k="save" t="Save" w={104} ml={15} /><ToolButton k="browse" t="Browse" w={108} />
      <ToolRule $ml={17} />
      <ToolButton k="find" t="Find" w={106} ml={14} /><ToolButton k="hide" t="Hide Unrelated" w={192} /><ToolArrow $w={58}><Down /></ToolArrow>
      <ToolRule $ml={12} />
      <ToolButton k="settings" t="Class Settings" w={192} ml={14} /><ToolButton k="defaults" t="Class Defaults" w={190} />
      <ToolRule $ml={19} />
      <ToolButton k="sim" t="Simulation" w={150} ml={15} />
      <ToolRule $ml={19} />
      <ToolButton k="play" t="Play" w={106} ml={14} /><ToolArrow $w={52}><Down /></ToolArrow>
      <DebugBox><DebugCombo>No debug object selected<Down c="#000" /></DebugCombo>Debug Filter</DebugBox>
    </Toolbar>
    <DocTabs>
      <DocTab $active><WindowGlyph /><PanelTitle>Viewport</PanelTitle><Close /></DocTab>
      <DocTab><GraphIcon /><PanelTitle>Event Graph</PanelTitle><Close c="#1c1c1c" /></DocTab>
      <DocTab><GraphIcon /><PanelTitle>Event Graph</PanelTitle><Close c="#1c1c1c" /></DocTab>
      <DocTab><GraphIcon /><PanelTitle>Damage Event Gra</PanelTitle><Close c="#1c1c1c" /></DocTab>
    </DocTabs>
    <Viewport>
      <SceneArt />
      <ViewBar>
        <ViewGroup $w={40} $mr={12} $h={44}><Down c="#000" /></ViewGroup>
        <ViewGroup $w={188} $mr={12} $h={44}><svg width="32" height="26" viewBox="0 0 34 26"><path d="M2 14l12-6 8 3v10l-8 4-11-3z" fill="#3a8cf4" /><path d="M16 6l12-5 5 4-2 9-9 4z" fill="#6cb0fa" /></svg>Perspective</ViewGroup>
        <ViewGroup $w={89} $mr={0} $h={44}><svg width="32" height="32" viewBox="0 0 32 32"><path d="M16 0l15 5-3 20-12 7L3 25 0 5z" fill="#2f6cf8" /><path d="M0 5l16 5 15-5-15-5z" fill="#7aa4e8" /><path d="M16 10v22l12-7 3-20z" fill="#1c34d8" /></svg>Lit</ViewGroup>
        <Spacer />
        <ViewGroup $w={141} $mr={10}>
          <svg width="132" height="36" viewBox="0 0 132 36">
            <path d="M18 2v32M2 18h32" stroke="#111" strokeWidth="3" /><path d="M18 0l5 7H13zM18 36l5-7H13zM0 18l7-5v10zM36 18l-7-5v10z" fill="#111" /><path d="M10 12l8-3 8 3v11l-8 4-8-4z" fill="#4a7ae0" />
            <path d="M58 8c-6 8-3 22 9 23 12 0 15-14 10-22" stroke="#222" strokeWidth="4" fill="none" /><path d="M70 4l12 2-4 9z" fill="#222" /><path d="M59 13l8-3 8 3v10l-8 4-8-4z" fill="#4a7ae0" />
            <path d="M98 34V22l12 12zM130 3v11L119 3z" fill="#111" /><path d="M104 28l20-19" stroke="#111" strokeWidth="3" /><path d="M106 15l8-4 8 4v10l-8 5-8-5z" fill="#4a7ae0" />
          </svg>
        </ViewGroup>
        <ViewGroup $w={45} $mr={9}><svg width="34" height="34" viewBox="0 0 34 34"><path d="M2 7l15-6 15 6v20l-15 7-15-7z" fill="#707070" /><path d="M17 14v20l15-7V7z" fill="#8f8f8f" /><path d="M2 7l15-6 15 6-15 7z" fill="#0a0a0a" /></svg></ViewGroup>
        <Segments $w={161} $mr={8}>
          <Cell $w={47}><svg width="30" height="28" viewBox="0 0 30 28"><path d="M2 18l8 0 4-14M10 18l8 8M14 14c4 6 8 0 12-6" stroke="#555" strokeWidth="2.500" fill="none" /><path d="M28 4l-1 9-7-5zM2 4l3-4 3 4z" fill="#333" /></svg><SmallDown /></Cell>
          <Cell $w={48} $on><svg width="26" height="28" viewBox="0 0 26 28"><path d="M1.500 1.500h23v25h-23zM7 1v26M13 1v26M19 1v26M1 8h24M1 14h24M1 20h24" stroke="#111" strokeWidth="2.200" fill="none" /></svg></Cell>
          <Cell $w={63}><SnapText>10</SnapText><SmallDown /></Cell>
        </Segments>
        <Segments $w={121} $mr={14}>
          <Cell $w={48} $on><svg width="30" height="30" viewBox="0 0 30 30"><path d="M2 27L15 3M2 27h26M15 3c7 5 9 14 9 22" stroke="#111" strokeWidth="2.600" fill="none" /><path d="M12 2l8 1-5 7zM20 18l8 0-3 8z" fill="#111" /></svg></Cell>
          <Cell $w={71}><SnapText>10°</SnapText><SmallDown /></Cell>
        </Segments>
        <Segments $w={132} $mr={10}>
          <Cell $w={48} $on><svg width="26" height="28" viewBox="0 0 26 28"><path d="M2 20h7v7H2zM24 2v12L13 3z" fill="#111" /><path d="M9 18l10-10" stroke="#111" strokeWidth="3.500" /></svg></Cell>
          <Cell $w={82}><SnapText>0.25</SnapText><SmallDown /></Cell>
        </Segments>
        <ViewGroup $w={94} $mr={0}>
          <svg width="32" height="30" viewBox="0 0 32 26"><path d="M0 3h12M2 9h10M0 16h12M2 23h10" stroke="#333" strokeWidth="2" /><circle cx="15" cy="5" r="4" fill="none" stroke="#111" strokeWidth="3" /><circle cx="25" cy="5" r="4" fill="none" stroke="#111" strokeWidth="3" /><path d="M12 10h15v4l5-3v14l-6-4v4H12z" fill="#111" /></svg>
          <Cell $w={38}><SnapText>4</SnapText><SmallDown /></Cell>
        </ViewGroup>
      </ViewBar>
    </Viewport>
  </Center>
);

const Prop = ({ t, h, off, children }: { t: string; h: number; off?: boolean; children?: React.ReactNode }) => (
  <DetailRow $h={h} $off={off}><DetailLabel><Clip>{t}</Clip></DetailLabel><DetailValue>{children}</DetailValue></DetailRow>
);
const Gap = styled.div<{ $h: number; $w?: number; $line?: boolean }>`
  height: ${(p) => p.$h}px;
  ${(p) => p.$w && css`width: ${p.$w}px;`}
  ${(p) => p.$line && css`background: linear-gradient(#272727, #272727) 134px 0 / 2px 100% no-repeat;`}
`;

const Details = () => (
  <Right>
    <PanelTab $w={300}>
      <svg width="32" height="32" viewBox="0 0 32 32"><path d="M21 21l9 9" stroke="#5078d0" strokeWidth="4" /><circle cx="14" cy="14" r="12" fill="#5a6068" stroke="#5078d0" strokeWidth="3" /><path d="M14 12v9M10 12h5M10 21h8" stroke="#f0f0f0" strokeWidth="3" /><circle cx="14" cy="7.500" r="2" fill="#f0f0f0" /></svg>
      <PanelTitle>Details</PanelTitle><Close />
    </PanelTab>
    <DetailsBody>
      <SearchRow>
        <SearchBox>Search Details<Lens /></SearchBox>
        <MatrixButton><svg width="28" height="30" viewBox="0 0 28 30"><path d="M1 3h4M7 3h9M18 3h9M1 9h4M7 9h9M18 9h9M1 15h4M7 15h9M18 15h9M1 21h4M7 21h9M18 21h9M1 27h4M7 27h9M18 27h9" stroke="#707070" strokeWidth="3.400" /></svg></MatrixButton>
        <Eye /><Gap $h={1} $w={6} /><Down />
      </SearchRow>
      <DetailHeader><Twist /><DetailTitle>Graph Node</DetailTitle></DetailHeader>
      <Prop t="Name" h={44}><Field><FieldClip><span>Event EndWeaponAttack</span></FieldClip></Field></Prop>
      <Gap $h={22} $line /><Gap $h={4} />
      <DetailHeader><Twist /><DetailTitle>Graph</DetailTitle></DetailHeader>
      <Prop t="Keywords" h={44}><Field /></Prop>
      <Prop t="Replicates" h={76}><Combo>Not Replicated<Down c="#000" /></Combo><CheckLine $mt={2}><Check $off />Reliable</CheckLine></Prop>
      <Prop t="Call In Edit" h={40}><CheckLine><Check /></CheckLine></Prop>
      <Shade />
      <Prop t="Deprecated" h={42}><CheckLine><Check /></CheckLine></Prop>
      <Prop t="Deprecation" h={44} off><Field $off /></Prop>
      <ExpandBar><svg width="20" height="14" viewBox="0 0 20 14"><path d="M10 0l10 8H0zM0 11h20v3H0z" fill="#d4d4d4" /></svg></ExpandBar>
      <DetailHeader><Twist /><DetailTitle>Inputs</DetailTitle><PlusButton $h={58}><Plus /></PlusButton></DetailHeader>
      <Note>Please press the + icon above to add p</Note>
    </DetailsBody>
    <ScrollTrack />
  </Right>
);

const Bar = () => (
  <Taskbar>
    <SysIcons>
      <Slot $w={94}><svg width="32" height="32" viewBox="0 0 32 32"><path d="M0 4.500L13 2.600V15H0zM14.500 2.400L32 0v15H14.500zM0 16.500h13v12.400L0 27zM14.500 16.500H32V32l-17.500-2.600z" fill="#fff" /></svg></Slot>
      <Slot $w={98}><svg width="34" height="34" viewBox="0 0 34 34"><circle cx="22" cy="12" r="10" fill="none" stroke="#fff" strokeWidth="2.400" /><path d="M15 19.500L2 33" stroke="#fff" strokeWidth="2.600" /></svg></Slot>
      <Slot $w={94}><svg width="32" height="32" viewBox="0 0 32 32"><circle cx="16" cy="16" r="13.500" fill="none" stroke="#fff" strokeWidth="3.600" /></svg></Slot>
      <Slot $w={95}><svg width="36" height="32" viewBox="0 0 36 32"><path d="M3 1v4h20V1M3 10h20v11H3zM3 31v-5h20v5M31 1v6M31 15v16" fill="none" stroke="#fff" strokeWidth="2.200" /><circle cx="31" cy="11" r="3.300" fill="#fff" /></svg></Slot>
      <svg width="48" height="48" viewBox="0 0 48 48"><path d="M36 0v12L8 37l-6-4v-3z" fill="#1084d4" /><path d="M36 48V36L8 11l-6 4v3z" fill="#0a6eb8" /><path d="M34 0l14 6v36l-14 6z" fill="#2aa4f2" /></svg>
    </SysIcons>
    <Task $w={304} $mr={18} $pl={14}>
      <svg width="44" height="44" viewBox="0 0 44 44"><circle cx="22" cy="22" r="22" fill="#fbc934" /><path d="M3 11A22 22 0 0141 11H22a11 11 0 00-10 16z" fill="#de4c3e" /><path d="M3 11l10 17 9 5-2 11A22 22 0 013 11z" fill="#1f9d55" /><circle cx="22" cy="22" r="10.500" fill="#fff" /><circle cx="22" cy="22" r="8.300" fill="#4587f4" /></svg>
      <TaskText $ml={6} $w={230}>dilation - Bing 词...</TaskText>
    </Task>
    <Task $w={304} $mr={18} $pl={20}>
      <svg width="28" height="42" viewBox="0 0 28 42"><path d="M2 0h24v22l2 2v11H2z" fill="#f0cc64" /><path d="M0 0l8 7v35l-8-5z" fill="#fbe8a0" /></svg>
      <TaskText $ml={15} $w={230}>day12-游戏的武器...</TaskText>
    </Task>
    <Task $w={304} $mr={10} $pl={12}>
      <svg width="48" height="48" viewBox="0 0 48 48"><path d="M0 13l6-3 30 26v12L2 16v16l4 6-6-3z" fill="#5b2d90" /><path d="M36 0v12L6 38l-6-3v-3z" fill="#8b55d0" /><path d="M34 0l14 6v36l-14 6z" fill="#b884f4" /></svg>
      <TaskText $ml={4} $w={240}>ActionRPG (Runni...</TaskText>
    </Task>
    <Task $w={320} $mr={10} $pl={21} $active>
      <svg width="46" height="46" viewBox="0 0 46 46"><circle cx="23" cy="23" r="21.500" fill="#262626" stroke="#f4f4f4" strokeWidth="2" /><g transform="translate(6 6) scale(.74 .88)"><path d="M1 20C3 12 8 5 16 2c-2 2-3 3-3 6v18c0 2 2 3 4 2l4-3V9c0-2-1-3-3-3 4-1 9-3 12-6-1 2-1 4-1 6v18c0 2 1 4 5 3-2 4-6 7-10 11l-3-5c-3 3-6 5-10 5-5 0-7-3-7-7V14c0-2-1-2-3 6z" fill="#fff" transform="scale(1.200 1)" /></g></svg>
      <TaskText $ml={5} $w={240}>ActionRPG [Debu...</TaskText>
    </Task>
    <Task $w={304} $mr={18} $pl={11}>
      <svg width="50" height="40" viewBox="0 0 50 40"><path d="M18 0c10 0 18 7 18 15s-8 16-18 16l-5-1-7 4 2-7C3 24 0 20 0 15 0 7 8 0 18 0z" fill="#3ade6a" /><circle cx="12" cy="10" r="2.400" fill="#145c2c" /><circle cx="24" cy="10" r="2.400" fill="#145c2c" /><path d="M34 14c8 0 15 6 15 13 0 4-2 7-5 9l1 4-5-2-6 1c-8 0-15-5-15-12s7-13 15-13z" fill="#ececec" /><circle cx="29" cy="22" r="2" fill="#8a8a8a" /><circle cx="39" cy="22" r="2" fill="#8a8a8a" /></svg>
      <TaskText $ml={2} $w={200}>微信</TaskText>
    </Task>
    <Task $w={304} $mr={0} $pl={12}>
      <svg width="48" height="46" viewBox="0 0 48 46"><path d="M3 2l9 2 12-4 12 4 9-2-1 8 4 13-4 13 1 8-9-2-12 4-12-4-9 2 1-8L0 23l4-13z" fill="#f2f2f2" /><path d="M17 15h14v4M17 19v-4M24 15v18M21 33h6" stroke="#333" strokeWidth="1.800" fill="none" /></svg>
      <TaskText $ml={5} $w={235}>README.md - Typ...</TaskText>
    </Task>
    <Tray>
      <svg width="26" height="16" viewBox="0 0 26 16" style={{ marginRight: 18 }}><path d="M1 15L13 2l12 13" fill="none" stroke="#fff" strokeWidth="2.200" /></svg>
      <svg width="34" height="28" viewBox="0 0 34 28" style={{ marginRight: 14 }}><path d="M8 2h24v18H6V10M6 20v6M19 20v5M12 26h14" fill="none" stroke="#fff" strokeWidth="2" /><path d="M1 1h9v10H1z" fill="none" stroke="#fff" strokeWidth="2" /><path d="M4 5h4v3H4z" fill="#fff" /></svg>
      <svg width="32" height="28" viewBox="0 0 32 28" style={{ marginRight: 15 }}><path d="M1 9h5l6-7v24l-6-7H1zM16 9q4 5 0 10M21 5q7 9 0 18" fill="none" stroke="#fff" strokeWidth="2" /><path d="M26 1q9 13 0 26" fill="none" stroke="#6d7a90" strokeWidth="2" /></svg>
      <Ime>中</Ime>
      <ImeBox>拼</ImeBox>
      <Clock><span>20:19</span><span>2020/7/6</span></Clock>
      <svg width="32" height="32" viewBox="0 0 32 32"><path d="M0 0h32v26H22l-6 6-6-6H0z" fill="#fff" /><path d="M6 7h20M6 13h20M6 19h12" stroke="#1b2a44" strokeWidth="2" /></svg>
      <ShowDesktop />
    </Tray>
  </Taskbar>
);

export default function App() {
  return (
    <Screen>
      <Global />
      <SharedDefs />
      <Title />
      <MenuBar>
        {["File", "Edit", "Asset", "View", "Debug", "Window", "Help"].map((m) => <MenuItem key={m}>{m}</MenuItem>)}
        <ParentClass>Parent class:<ParentLink>Actor</ParentLink></ParentClass>
      </MenuBar>
      <Main>
        <Left />
        <CenterPane />
        <Details />
      </Main>
      <Bar />
      <Highlight $x={1437} $y={-1} $w={431} $h={109} />
      <Highlight $x={1546} $y={810} $w={741} $h={779} />
    </Screen>
  );
}
